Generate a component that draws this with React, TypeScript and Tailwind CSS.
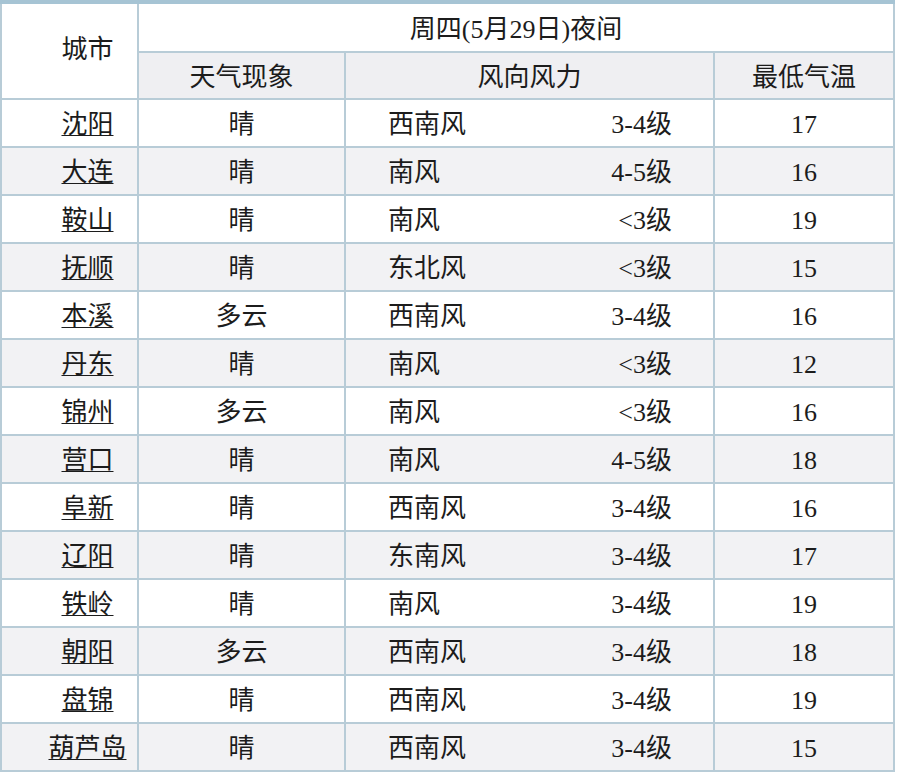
const rows: [string, string, string, string, string][] = [
  ["沈阳", "晴", "西南风", "3-4级", "17"],
  ["大连", "晴", "南风", "4-5级", "16"],
  ["鞍山", "晴", "南风", "<3级", "19"],
  ["抚顺", "晴", "东北风", "<3级", "15"],
  ["本溪", "多云", "西南风", "3-4级", "16"],
  ["丹东", "晴", "南风", "<3级", "12"],
  ["锦州", "多云", "南风", "<3级", "16"],
  ["营口", "晴", "南风", "4-5级", "18"],
  ["阜新", "晴", "西南风", "3-4级", "16"],
  ["辽阳", "晴", "东南风", "3-4级", "17"],
  ["铁岭", "晴", "南风", "3-4级", "19"],
  ["朝阳", "多云", "西南风", "3-4级", "18"],
  ["盘锦", "晴", "西南风", "3-4级", "19"],
  ["葫芦岛", "晴", "西南风", "3-4级", "15"],
];

export default function App() {
  return (
    <div
      className="w-[898px] h-[776px] bg-white text-[26px] leading-none text-[#1c1c1c]"
      style={{ fontFamily: '"Liberation Serif", "Noto Sans CJK SC", serif' }}
    >
      <div className="w-[895px] border-t-4 border-[#a6c4d4]">
        <div className="grid grid-cols-[135px_205px_367px_178px] grid-rows-[47px_45px] gap-[2px] px-[2px] pb-[2px] bg-[#b8ccd7]">
          <div className="row-span-2 bg-white flex items-center justify-center pl-[36px] pb-[2px]">城市</div>
          <div className="col-span-3 bg-white flex items-center justify-center pt-[4px]">周四(5月29日)夜间</div>
          <div className="bg-[#efeff2] flex items-center justify-center pt-[4px]">天气现象</div>
          <div className="bg-[#efeff2] flex items-center justify-center pt-[4px]">风向风力</div>
          <div className="bg-[#efeff2] flex items-center justify-center pt-[4px]">最低气温</div>
          {rows.map(([city, sky, dir, level, temp], i) => {
            const bg = i % 2 === 0 ? "bg-white" : "bg-[#f2f2f4]";
            return [
              <div key={city + "c"} className={`${bg} h-[46px] flex items-center justify-center pl-[36px] pt-[4px]`}>
                <span className="underline underline-offset-[2px] decoration-1">{city}</span>
              </div>,
              <div key={city + "s"} className={`${bg} flex items-center justify-center pt-[4px]`}>{sky}</div>,
              <div key={city + "w"} className={`${bg} flex items-center justify-between pl-[42px] pr-[41px] pt-[4px]`}>
                <span>{dir}</span>
                <span>{level}</span>
              </div>,
              <div key={city + "t"} className={`${bg} flex items-center justify-center pt-[4px]`}>{temp}</div>,
            ];
          })}
        </div>
      </div>
    </div>
  );
}
